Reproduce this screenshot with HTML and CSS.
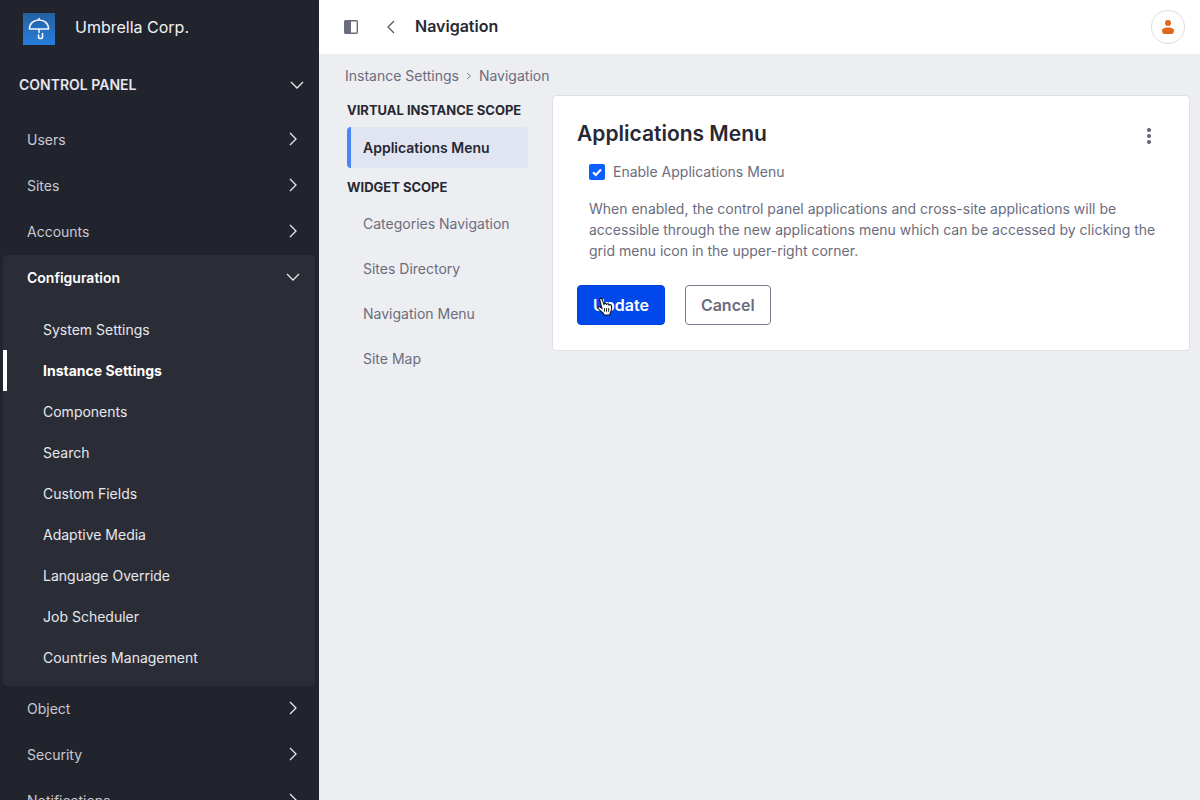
FILE: index.html
```html
<!DOCTYPE html>
<html lang="en">
<head>
<meta charset="utf-8">
<title>Navigation - Instance Settings</title>
<link rel="stylesheet" href="styles.css">
</head>
<body>
<svg class="sprite" aria-hidden="true">
  <symbol id="chevron-right" viewBox="0 0 14 14"><path d="M4 1 10 7 4 13"/></symbol>
  <symbol id="chevron-down" viewBox="0 0 14 14"><path d="M1 4 7 10 13 4"/></symbol>
</svg>
<div class="app">
  <aside class="sidebar">
    <a class="brand" href="#">
      <svg class="brand-logo" viewBox="0 0 32 32" aria-hidden="true">
        <defs><linearGradient id="logo-fill" x1="0" y1="0" x2="0" y2="1"><stop offset="0" stop-color="#2460a0"/><stop offset="1" stop-color="#267edb"/></linearGradient></defs>
        <rect width="32" height="32" fill="url(#logo-fill)"/>
        <path d="M6.500 16C6.500 10.500 10.500 7 16 7s9.500 3.500 9.500 9zM16 5.500V7M16 16v3.500M15.500 22v2c0 2 4 2 4 0v-3.500" fill="none" stroke="#f4f8ff" stroke-width="1.600" stroke-linecap="round" stroke-linejoin="round"/>
      </svg>
      <span>Umbrella Corp.</span>
    </a>
    <button class="panel-title" type="button">CONTROL PANEL <svg class="chevron"><use href="#chevron-down"/></svg></button>
    <nav class="menu" aria-label="Control panel">
      <button class="menu-row" type="button">Users <svg class="chevron"><use href="#chevron-right"/></svg></button>
      <button class="menu-row" type="button">Sites <svg class="chevron"><use href="#chevron-right"/></svg></button>
      <button class="menu-row" type="button">Accounts <svg class="chevron"><use href="#chevron-right"/></svg></button>
      <div class="menu-group">
        <button class="menu-row open" type="button" aria-expanded="true">Configuration <svg class="chevron"><use href="#chevron-down"/></svg></button>
        <div class="submenu">
          <a href="#">System Settings</a>
          <a class="current" href="#" aria-current="page">Instance Settings</a>
          <a href="#">Components</a>
          <a href="#">Search</a>
          <a href="#">Custom Fields</a>
          <a href="#">Adaptive Media</a>
          <a href="#">Language Override</a>
          <a href="#">Job Scheduler</a>
          <a href="#">Countries Management</a>
        </div>
      </div>
      <button class="menu-row" type="button">Object <svg class="chevron"><use href="#chevron-right"/></svg></button>
      <button class="menu-row" type="button">Security <svg class="chevron"><use href="#chevron-right"/></svg></button>
      <button class="menu-row" type="button">Notifications <svg class="chevron"><use href="#chevron-right"/></svg></button>
    </nav>
  </aside>
  <div class="page">
    <header class="topbar">
      <button class="icon-button" type="button" aria-label="Toggle product menu">
        <svg width="14" height="14" viewBox="0 0 14 14"><rect x=".7" y=".7" width="12.600" height="12.600" rx="1" fill="none" stroke="#6b6c7e" stroke-width="1.400"/><path d="M1 1h6v12H1z" fill="#6b6c7e"/></svg>
      </button>
      <a class="icon-button back" href="#" aria-label="Back">
        <svg width="8" height="14" viewBox="0 0 8 14"><path d="M7 1 1 7l6 6" fill="none" stroke="#54555f" stroke-width="1.200"/></svg>
      </a>
      <h1 class="page-title">Navigation</h1>
      <button class="avatar" type="button" aria-label="User profile">
        <svg width="14" height="14" viewBox="0 0 14 14" fill="#e0681c"><circle cx="7" cy="3" r="3"/><path d="M1 10.500C1 8.500 3.500 7.500 7 7.500s6 1 6 3C13 13 12 14 10 14H4c-2 0-3-1-3-3.500z"/></svg>
      </button>
    </header>
    <main class="content">
      <nav class="breadcrumb" aria-label="Breadcrumb">
        <a href="#">Instance Settings</a>
        <svg width="6" height="8" viewBox="0 0 6 8"><path d="M1 1l3.500 3L1 7" fill="none" stroke="#7c7d8a"/></svg>
        <span>Navigation</span>
      </nav>
      <div class="columns">
        <nav class="scopes" aria-label="Scopes">
          <h2 class="scope-title">VIRTUAL INSTANCE SCOPE</h2>
          <a class="scope-link active" href="#" aria-current="page">Applications Menu</a>
          <h2 class="scope-title">WIDGET SCOPE</h2>
          <div class="scope-list">
            <a class="scope-link" href="#">Categories Navigation</a>
            <a class="scope-link" href="#">Sites Directory</a>
            <a class="scope-link" href="#">Navigation Menu</a>
            <a class="scope-link" href="#">Site Map</a>
          </div>
        </nav>
        <form class="card">
          <div class="card-head">
            <h2 class="card-title">Applications Menu</h2>
            <button class="kebab" type="button" aria-label="Options">
              <svg width="6" height="16" viewBox="0 0 6 16" fill="#61626f"><circle cx="3" cy="2" r="2"/><circle cx="3" cy="8" r="2"/><circle cx="3" cy="14" r="2"/></svg>
            </button>
          </div>
          <div class="field">
            <label class="check"><input type="checkbox" checked><svg viewBox="0 0 16 16" aria-hidden="true"><path d="M4 8.200 6.800 11 12 5.500"/></svg>Enable Applications Menu</label>
            <p class="help">When enabled, the control panel applications and cross-site applications will be accessible through the new applications menu which can be accessed by clicking the grid menu icon in the upper-right corner.</p>
          </div>
          <div class="actions">
            <button class="button primary" type="button">Update
              <svg class="pointer" viewBox="0 0 16 18" aria-hidden="true"><path d="M4.200 9.500 2.600 2.800C2.300 1.200 4.200.6 4.800 2.200L6.500 7C7 5.800 8.500 5.800 9 7c.8-1 2-.6 2.300.6.900-.6 2-.1 2.200.9.500 2.500.2 4.500-1 6.500L12 17H6.500L6 15.500 1.200 11.200C.2 10 1.500 8.800 2.800 9.500l1.800 1.300z" fill="#fff" stroke="#111"/><path d="M7 10.500v3.500M9 10.500v3.500M11 10.500v3.500" stroke="#111" stroke-width=".9"/></svg>
            </button>
            <button class="button" type="button">Cancel</button>
          </div>
        </form>
      </div>
    </main>
  </div>
</div>
</body>
</html>
```
FILE: styles.css
```css
* { box-sizing: border-box; }
body {
  margin: 0;
  font: 14px/21px Inter, "Liberation Sans", sans-serif;
  color: #6b6c7e;
  background: #edeef1;
}
button { font: inherit; color: inherit; background: none; border: 0; padding: 0; }
a { color: inherit; text-decoration: none; }
h1, h2, p { margin: 0; }
.sprite { display: none; }
.app { display: flex; height: 100vh; overflow: hidden; }

.sidebar { flex: 0 0 319px; overflow: hidden; background: #22242d; color: #c8c9d2; }
.brand {
  display: flex;
  align-items: center;
  gap: 20px;
  height: 54px;
  padding: 3px 23px 0;
  font-size: 16px;
  color: #f1f2f5;
}
.brand span { padding-bottom: 2px; }
.brand-logo { width: 32px; height: 32px; }
.panel-title {
  display: flex;
  align-items: center;
  justify-content: space-between;
  width: 100%;
  height: 63px;
  padding: 0 15px 2px 19px;
  font-weight: 600;
  color: #e7e7ed;
}
.menu { padding: 0 4px 0 3px; }
.menu-row {
  display: flex;
  align-items: center;
  justify-content: space-between;
  width: 100%;
  height: 46px;
  padding: 0 15px 2px 24px;
}
.chevron { width: 14px; height: 14px; fill: none; stroke: #e7e7ed; stroke-width: 1.3; }
.menu-group { background: #2b2d36; border-radius: 4px; }
.menu-row.open { font-weight: 600; color: #fff; }
.submenu { display: flex; flex-direction: column; padding: 8px 0; color: #e7e7ed; }
.submenu a { padding: 10px 16px 10px 36px; border-left: 4px solid transparent; }
.submenu .current { border-left-color: #fff; font-weight: 700; color: #fff; }

.page { flex: 1; min-width: 0; }
.topbar { display: flex; align-items: center; height: 54px; padding: 0 15px 0 24px; background: #fff; }
.icon-button { display: flex; align-items: center; justify-content: center; width: 16px; height: 16px; }
.back { margin: 0 16px 0 24px; }
.page-title { flex: 1; padding-bottom: 2px; font-size: 16px; line-height: 24px; font-weight: 600; color: #272833; }
.avatar {
  display: flex;
  align-items: center;
  justify-content: center;
  width: 34px;
  height: 34px;
  border: 1px solid #dcdce6;
  border-radius: 50%;
}
.content { padding: 11px 10px 0 26px; }
.breadcrumb { display: flex; align-items: center; gap: 7px; }
.columns { display: flex; align-items: flex-start; gap: 24px; padding: 9px 0 0 2px; }
.scopes { flex: 0 0 181px; padding-top: 5px; }
.scope-title { font-size: 13px; line-height: 21px; font-weight: 700; color: #272833; white-space: nowrap; }
.scope-link { display: block; padding: 10px 16px; }
.scope-link.active {
  margin: 6px 0 9px;
  padding-left: 12px;
  border-left: 4px solid #4b86f8;
  border-radius: 4px;
  background: #e0e5f1;
  font-weight: 600;
  color: #272833;
}
.scope-list { display: grid; gap: 4px; padding-top: 5px; }

.card { flex: 1; padding: 24px; border: 1px solid #dfe0e6; border-radius: 4px; background: #fff; }
.card-head { display: flex; align-items: flex-start; justify-content: space-between; }
.card-title { font-size: 21px; line-height: 27px; font-weight: 600; color: #272833; }
.kebab { display: flex; align-items: center; justify-content: center; width: 32px; height: 32px; }
.field { padding: 9px 0 0 12px; }
.check { display: flex; align-items: center; gap: 8px; position: relative; }
.check input { appearance: none; width: 16px; height: 16px; margin: 0; border-radius: 2px; background: #0b5fff; }
.check svg { position: absolute; left: 0; width: 16px; height: 16px; fill: none; stroke: #fff; stroke-width: 2; }
.help { padding: 16px 0 24px; }
.actions { display: flex; gap: 20px; padding-bottom: 1px; }
.button {
  position: relative;
  height: 40px;
  padding: 0 15px;
  border: 1px solid #7b7c8e;
  border-radius: 4px;
  font-size: 16px;
  font-weight: 600;
}
.primary { border-color: #0040e0; background: #0048ea; color: #fff; }
.pointer { position: absolute; left: 19px; top: 11px; width: 17px; height: 19px; }
```
